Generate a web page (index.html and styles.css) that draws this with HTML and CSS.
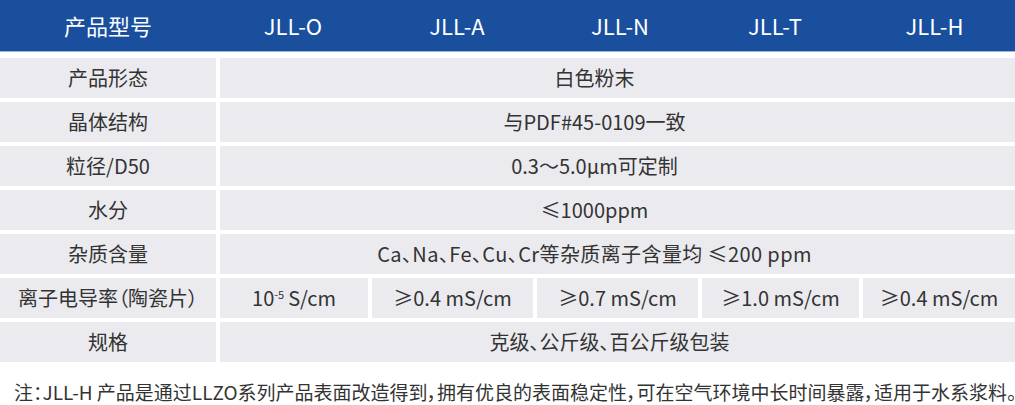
FILE: index.html
```html
<!DOCTYPE html>
<html lang="zh-CN">
<head>
<meta charset="utf-8">
<title>产品参数</title>
<link rel="stylesheet" href="styles.css">
</head>
<body>
<div class="spec">
  <div class="head">
    <div class="hcell">产品型号</div>
    <div class="hcell">JLL-O</div>
    <div class="hcell">JLL-A</div>
    <div class="hcell">JLL-N</div>
    <div class="hcell">JLL-T</div>
    <div class="hcell">JLL-H</div>
  </div>
  <div class="rows">
    <div class="row">
      <div class="cell label">产品形态</div>
      <div class="cell span">白色粉末</div>
    </div>
    <div class="row">
      <div class="cell label">晶体结构</div>
      <div class="cell span">与PDF#45-0109一致</div>
    </div>
    <div class="row">
      <div class="cell label">粒径/D50</div>
      <div class="cell span">0.3～5.0μm可定制</div>
    </div>
    <div class="row">
      <div class="cell label">水分</div>
      <div class="cell span">≤1000ppm</div>
    </div>
    <div class="row">
      <div class="cell label">杂质含量</div>
      <div class="cell span wide">Ca、Na、Fe、Cu、Cr等杂质离子含量均 ≤200 ppm</div>
    </div>
    <div class="row">
      <div class="cell label">离子电导率（陶瓷片）</div>
      <div class="cell">10<sup>-5</sup> S/cm</div>
      <div class="cell">≥0.4 mS/cm</div>
      <div class="cell">≥0.7 mS/cm</div>
      <div class="cell">≥1.0 mS/cm</div>
      <div class="cell">≥0.4 mS/cm</div>
    </div>
    <div class="row">
      <div class="cell label">规格</div>
      <div class="cell span pack">克级、公斤级、百公斤级包装</div>
    </div>
  </div>
</div>
<p class="note">注：JLL-H 产品是通过LLZO系列产品表面改造得到，拥有优良的表面稳定性，可在空气环境中长时间暴露，适用于水系浆料。</p>
</body>
</html>
```

FILE: styles.css
```css
* { box-sizing: border-box; }
html, body {
  margin: 0;
  padding: 0;
  background: #ffffff;
}
body {
  width: 1015px;
  height: 405px;
  overflow: hidden;
  font-family: "Noto Sans CJK SC", "Noto Sans", sans-serif;
  color: #333333;
}
.head {
  display: grid;
  grid-template-columns: 216px 154px 174px 152px 158px 1fr;
  height: 52px;
  background: #1a4f9e;
  border-bottom: 1px solid #9fb6d8;
}
.hcell {
  display: flex;
  align-items: center;
  justify-content: center;
  color: #ffffff;
  font-size: 22px;
  padding-bottom: 2px;
}
.rows {
  display: flex;
  flex-direction: column;
  gap: 4px;
  padding-top: 6px;
}
.row {
  display: grid;
  grid-template-columns: 216px 148px 161px 161px 157px 1fr;
  column-gap: 4px;
  height: 40px;
}
.cell {
  display: flex;
  align-items: center;
  justify-content: center;
  background: #ebebef;
  font-size: 20px;
  white-space: nowrap;
  padding-bottom: 1px;
  font-feature-settings: "palt";
}
.cell.span {
  grid-column: 2 / -1;
  padding-right: 46px;
}
.cell.wide {
  letter-spacing: 0.4px;
}
.cell.pack {
  padding-right: 16px;
}
.cell sup {
  font-size: 11px;
  line-height: 1;
  align-self: flex-start;
  margin-top: 11px;
  margin-right: 4px;
}
.note {
  margin: 0;
  padding: 18px 0 0 14px;
  font-size: 19px;
  line-height: 24px;
  color: #333333;
  white-space: nowrap;
  font-feature-settings: "palt";
}
```
